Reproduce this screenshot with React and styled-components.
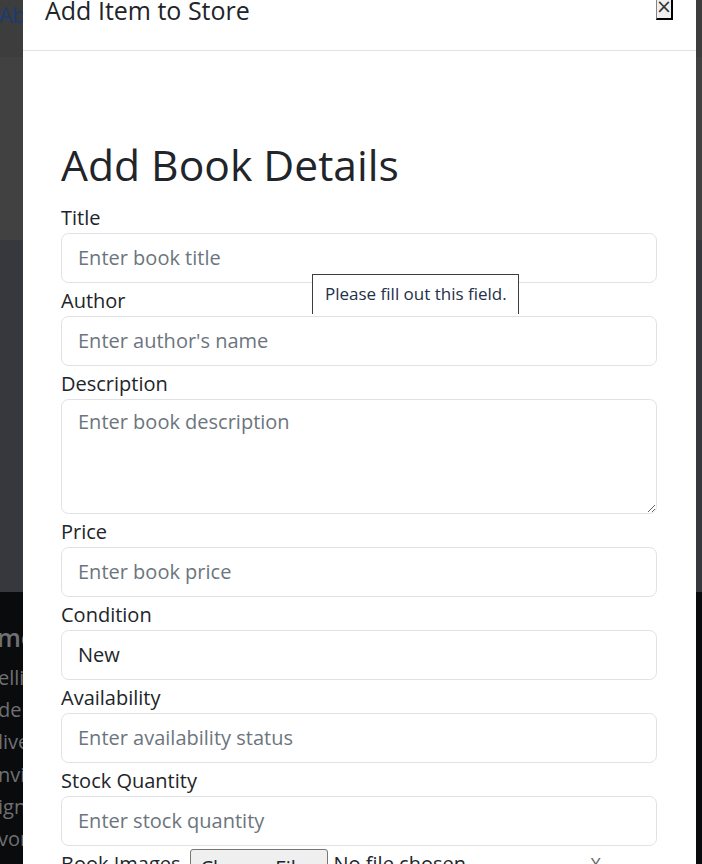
import React from "react";
import styled, { createGlobalStyle } from "styled-components";

const GlobalStyle = createGlobalStyle`
  html, body {
    margin: 0;
    padding: 0;
    height: 100%;
    overflow: hidden;
  }
  body {
    font-family: "Open Sans", "Noto Sans", sans-serif;
    color: #212529;
    background: #0b0b0c;
  }
`;

const Page = styled.div`
  display: flex;
  flex-direction: column;
  height: 864px;
`;

const NavBar = styled.div`
  height: 57px;
  background: #3d3d3e;
  display: flex;
  align-items: flex-start;
`;

const NavLink = styled.span`
  font-size: 21px;
  line-height: 30px;
  color: #1c3a73;
  margin-left: -1px;
`;

const Hero = styled.div`
  height: 183px;
  background: #414142;
`;

const Section = styled.div`
  height: 352px;
  background: #37383d;
`;

const Footer = styled.div`
  flex: 1;
  background: #0a0b0c;
  padding-top: 28px;
  color: #6f7074;
`;

const FooterHeading = styled.div`
  font-size: 25px;
  font-weight: 600;
  line-height: 34px;
  margin-bottom: 8px;
  margin-left: -3px;
`;

const FooterLine = styled.div`
  font-size: 20px;
  line-height: 32.2px;
  margin-left: -2px;
`;

const Backdrop = styled.div`
  position: fixed;
  inset: 0;
  overflow: hidden;
`;

const Dialog = styled.div`
  margin: -28px 6px 0 23px;
  background: #fff;
  height: 900px;
`;

const Header = styled.div`
  display: flex;
  align-items: flex-start;
  justify-content: space-between;
  padding: 20px 23px 20px 22px;
  border-bottom: 1px solid #dee2e6;
`;

const ModalTitle = styled.h5`
  margin: 0;
  font-size: 25px;
  font-weight: 500;
  line-height: 37.5px;
`;

const CloseButton = styled.button`
  margin-top: 2px;
  width: 17px;
  height: 26px;
  padding: 0 0 2px;
  background: #efefef;
  border: none;
  border-left: 1px solid #858585;
  border-right: 2px solid #000;
  border-bottom: 2px solid #000;
  font-family: "DejaVu Sans", sans-serif;
  font-size: 19px;
  line-height: 20px;
  color: #333;
  text-align: center;
  display: flex;
  align-items: flex-end;
  justify-content: center;
`;

const Body = styled.div`
  padding: 89px 39px 0 38px;
`;

const Heading = styled.h1`
  margin: 0 0 14px;
  font-size: 42.6px;
  font-weight: 500;
  line-height: 49px;
`;

const Form = styled.form`
  display: flex;
  flex-direction: column;
  gap: 3px;
  position: relative;
`;

const Field = styled.div`
  display: flex;
  flex-direction: column;
`;

const Label = styled.label`
  font-size: 20px;
  line-height: 30px;
`;

const Control = styled.input`
  box-sizing: border-box;
  height: ${(p) => (p.as === "textarea" ? "115px" : "50px")};
  padding: 7.5px 16px;
  border: 1px solid #dee2e6;
  border-radius: 7.5px;
  font-family: inherit;
  font-size: 20px;
  line-height: 30px;
  color: #212529;
  background: #fff;
  resize: vertical;
  outline: none;

  &::placeholder {
    color: #6c757d;
  }
`;

const FileRow = styled.div`
  display: flex;
  align-items: flex-start;
  gap: 6px;
  font-size: 20px;
  line-height: 30px;
  white-space: nowrap;
`;

const FileButton = styled.span`
  box-sizing: border-box;
  width: 138px;
  text-align: center;
  padding-top: 3px;
  height: 40px;
  border: 1px solid #767676;
  border-radius: 3px;
  background: #efefef;
  margin-left: 3px;
`;

const FileName = styled.span`
  flex: 1;
`;

const ClearMark = styled.span`
  color: #666;
  margin-right: 56px;
  font-size: 18px;
`;

const Tooltip = styled.div`
  position: absolute;
  left: 251px;
  top: 71px;
  width: 207px;
  height: 40px;
  background: #fff;
  border: 1px solid #3d3d3d;
  border-bottom: none;
  padding: 0 12px;
  box-sizing: border-box;
  font-size: 17px;
  line-height: 38px;
  color: #24304a;
  white-space: nowrap;
`;

const fields = [
  { label: "Title", placeholder: "Enter book title" },
  { label: "Author", placeholder: "Enter author's name" },
  { label: "Description", placeholder: "Enter book description", area: true },
  { label: "Price", placeholder: "Enter book price" },
  { label: "Condition", value: "New" },
  { label: "Availability", placeholder: "Enter availability status" },
  { label: "Stock Quantity", placeholder: "Enter stock quantity" },
];

export default function App() {
  return (
    <>
      <GlobalStyle />
      <Page>
        <NavBar>
          <NavLink>About</NavLink>
        </NavBar>
        <Hero />
        <Section />
        <Footer>
          <FooterHeading>me</FooterHeading>
          <FooterLine>elling</FooterLine>
          <FooterLine>der</FooterLine>
          <FooterLine>livery</FooterLine>
          <FooterLine>nvironment</FooterLine>
          <FooterLine>ign up</FooterLine>
          <FooterLine>vorites</FooterLine>
        </Footer>
      </Page>

      <Backdrop>
        <Dialog>
          <Header>
            <ModalTitle>Add Item to Store</ModalTitle>
            <CloseButton type="button">×</CloseButton>
          </Header>
          <Body>
            <Heading>Add Book Details</Heading>
            <Form onSubmit={(e) => e.preventDefault()}>
              {fields.map((f) => (
                <Field key={f.label}>
                  <Label>{f.label}</Label>
                  {f.area ? (
                    <Control as="textarea" placeholder={f.placeholder} />
                  ) : (
                    <Control
                      type="text"
                      placeholder={f.placeholder}
                      defaultValue={f.value}
                    />
                  )}
                </Field>
              ))}
              <FileRow>
                <span>Book Images</span>
                <FileButton>Choose Files</FileButton>
                <FileName>No file chosen</FileName>
                <ClearMark>X</ClearMark>
              </FileRow>
              <Tooltip>Please fill out this field.</Tooltip>
            </Form>
          </Body>
        </Dialog>
      </Backdrop>
    </>
  );
}
